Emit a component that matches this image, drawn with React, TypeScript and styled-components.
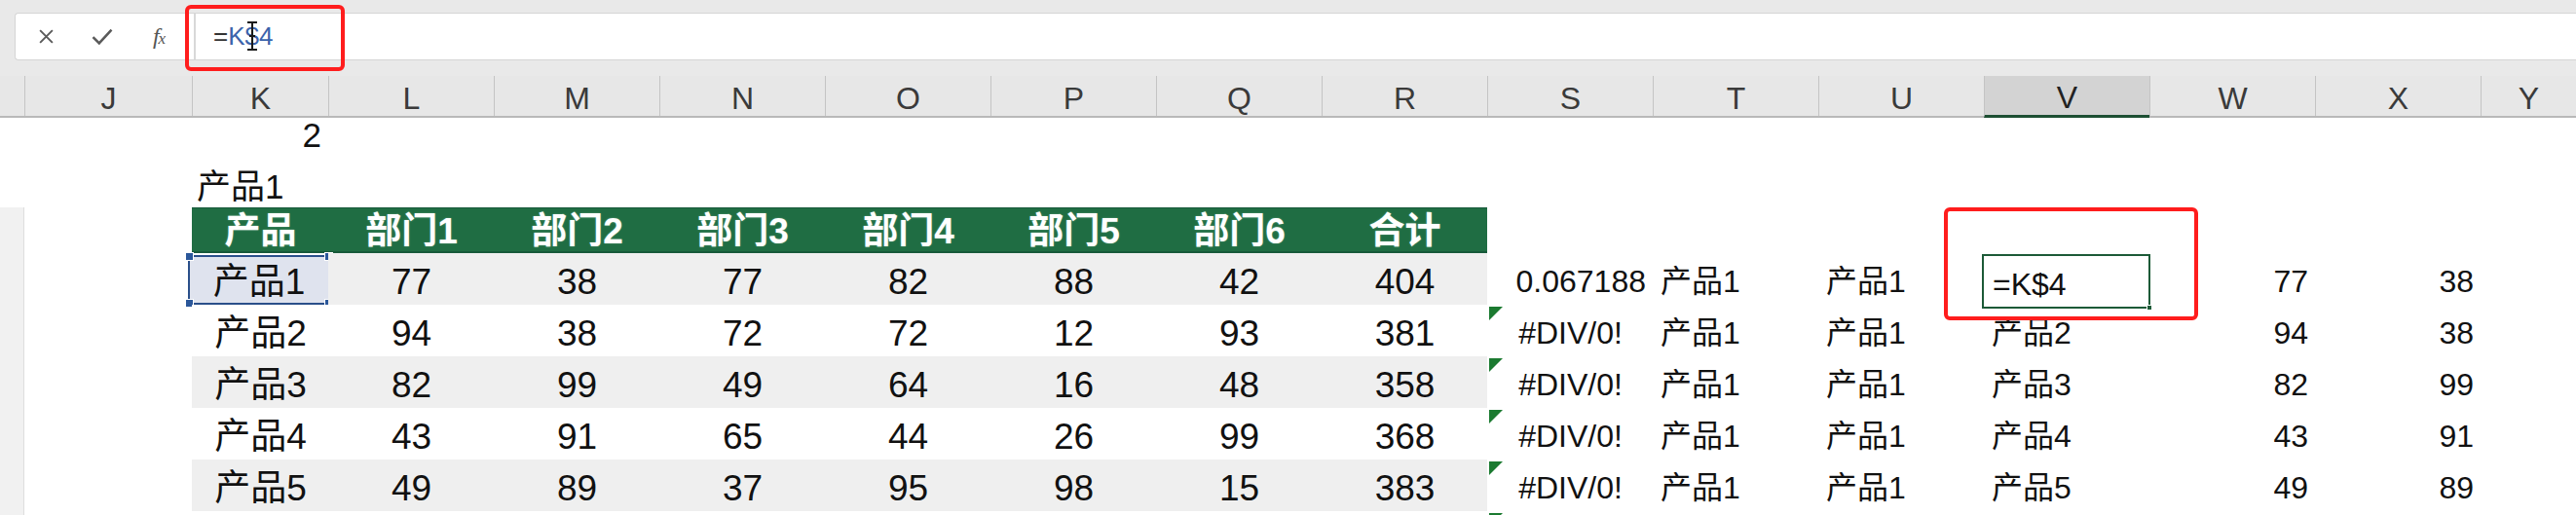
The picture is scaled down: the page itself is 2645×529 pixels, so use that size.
import React from 'react';
import styled, { createGlobalStyle, css } from 'styled-components';

const COLS = '25px 172px 140px repeat(13, 170px) 98px';
const TABLE_FONT = '"Liberation Sans", "Noto Sans CJK SC", sans-serif';
const PLAIN_FONT = '"Liberation Sans", "Noto Sans CJK SC", Arial, sans-serif';

const GlobalStyle = createGlobalStyle`
  html, body {
    margin: 0;
    padding: 0;
    background: #ffffff;
    font-family: ${PLAIN_FONT};
  }
  * {
    box-sizing: border-box;
  }
`;

const Page = styled.div`
  position: relative;
  width: 2645px;
  height: 529px;
  overflow: hidden;
  background: #ffffff;
`;

/* ---------- formula bar ---------- */

const TopBar = styled.div`
  height: 78px;
  padding: 13px 0 0 15px;
  background: #e9e9e9;
`;

const FormulaBar = styled.div`
  display: flex;
  height: 49px;
  background: #ffffff;
  border: 1px solid #d5d5d5;
  border-right: none;
  border-radius: 4px 0 0 4px;
`;

const IconGroup = styled.div`
  display: flex;
  align-items: center;
  width: 183px;
  padding-left: 2px;
`;

const IconSlot = styled.div`
  display: flex;
  align-items: center;
  justify-content: center;
  width: 58px;
  height: 100%;
  color: #5a5a5a;
`;

const FxGlyph = styled.span`
  font-family: "Liberation Serif", "DejaVu Serif", serif;
  font-style: italic;
  font-size: 24px;
  color: #555555;
  letter-spacing: -1px;

  small {
    font-size: 17px;
  }
`;

const Divider = styled.div`
  width: 2px;
  background: #d8d8d8;
`;

const FormulaInput = styled.div`
  position: relative;
  display: flex;
  align-items: center;
  flex: 1;
  padding-left: 18px;
  font-family: ${PLAIN_FONT};
  font-size: 26px;
  color: #333333;
`;

const RefText = styled.span`
  color: #3b63ab;
`;

const IBeam = styled.svg`
  position: absolute;
  left: 52px;
  top: 8px;
`;

/* ---------- column headers ---------- */

const ColumnHeaders = styled.div`
  display: grid;
  grid-template-columns: ${COLS};
  height: 43px;
  background: #e7e7e7;
  border-bottom: 2px solid #b9b9b9;
`;

const ColHead = styled.div<{ $active?: boolean }>`
  display: flex;
  align-items: center;
  justify-content: center;
  padding-top: 4px;
  border-left: 1px solid #c4c4c4;
  font-family: ${PLAIN_FONT};
  font-size: 32px;
  line-height: 1;
  color: #3a3a3a;

  ${({ $active }) =>
    $active &&
    css`
      background: #d3d3d3;
      color: #222222;
      border-bottom: 3px solid #1d4f33;
      margin-bottom: -2px;
    `}
`;

const Corner = styled.div``;

/* ---------- sheet rows ---------- */

const SheetRow = styled.div<{ $h: number }>`
  display: grid;
  grid-template-columns: ${COLS};
  height: ${({ $h }) => $h}px;
`;

const RowHead = styled.div<{ $shaded?: boolean }>`
  background: ${({ $shaded }) => ($shaded ? '#f1f1f1' : '#ffffff')};
  border-right: ${({ $shaded }) => ($shaded ? '1px solid #dedede' : 'none')};
`;

type Band = 'green' | 'grey' | 'white' | 'none';
type Align = 'left' | 'center' | 'right';

const bandColor: Record<Band, string> = {
  green: '#1f6d43',
  grey: '#efefef',
  white: '#ffffff',
  none: 'transparent',
};

const justify: Record<Align, string> = {
  left: 'flex-start',
  center: 'center',
  right: 'flex-end',
};

const Cell = styled.div<{
  $band?: Band;
  $align?: Align;
  $plain?: boolean;
  $bold?: boolean;
  $valign?: 'center' | 'bottom';
}>`
  position: relative;
  display: flex;
  align-items: ${({ $valign }) => ($valign === 'bottom' ? 'flex-end' : 'center')};
  justify-content: ${({ $align = 'center' }) => justify[$align]};
  padding: ${({ $valign }) => ($valign === 'bottom' ? '0 7px 4px 5px' : '5px 7px 0 8px')};
  background: ${({ $band = 'none' }) => bandColor[$band]};
  font-family: ${({ $plain }) => ($plain ? PLAIN_FONT : TABLE_FONT)};
  font-size: ${({ $plain, $valign }) => ($plain ? 32 : $valign === 'bottom' ? 35 : 37)}px;
  line-height: 1;
  font-weight: ${({ $bold }) => ($bold ? 700 : 400)};
  color: ${({ $band }) => ($band === 'green' ? '#ffffff' : '#111111')};
  white-space: nowrap;

  ${({ $band }) =>
    $band === 'green' &&
    css`
      padding-top: 3px;
      border-top: 1px solid #17593a;
      border-bottom: 2px solid #17593a;
      text-shadow: 0 0 2px rgba(230, 255, 240, 0.35);
    `}
`;

const SelectedCell = styled(Cell)`
  background: #dfe3ee;
  border: 2px solid #2a4f8a;
  margin: 2px -2px 0 -4px;
  padding: 3px 0 0 0;
`;

const Handle = styled.span<{ $x: 'l' | 'r'; $y: 't' | 'b' }>`
  position: absolute;
  width: 9px;
  height: 9px;
  background: #2b579a;
  border: 1px solid #ffffff;
  ${({ $x }) => ($x === 'l' ? 'left: -5px;' : 'right: -5px;')}
  ${({ $y }) => ($y === 't' ? 'top: -5px;' : 'bottom: -5px;')}
`;

const EditCell = styled(Cell)`
  background: #ffffff;
  border: 2px solid #1c5a37;
  margin: 1px -1px -4px -2px;
  padding-left: 9px;
`;

const FillHandle = styled.span`
  position: absolute;
  right: -4px;
  bottom: -4px;
  width: 6px;
  height: 6px;
  background: #1c5a37;
  border: 1px solid #ffffff;
`;

const ErrorFlag = styled.span`
  position: absolute;
  left: 2px;
  top: 2px;
  width: 0;
  height: 0;
  border-top: 14px solid #1b7a30;
  border-right: 14px solid transparent;
`;

const Callout = styled.div<{ $x: number; $y: number; $w: number; $h: number }>`
  position: absolute;
  left: ${({ $x }) => $x}px;
  top: ${({ $y }) => $y}px;
  width: ${({ $w }) => $w}px;
  height: ${({ $h }) => $h}px;
  border: 4px solid #ff1d1d;
  border-radius: 6px;
  pointer-events: none;
`;

/* ---------- data ---------- */

const letters = ['J', 'K', 'L', 'M', 'N', 'O', 'P', 'Q', 'R', 'S', 'T', 'U', 'V', 'W', 'X', 'Y'];
const headers = ['产品', '部门1', '部门2', '部门3', '部门4', '部门5', '部门6', '合计'];
const rows: [string, ...number[]][] = [
  ['产品1', 77, 38, 77, 82, 88, 42, 404],
  ['产品2', 94, 38, 72, 72, 12, 93, 381],
  ['产品3', 82, 99, 49, 64, 16, 48, 358],
  ['产品4', 43, 91, 65, 44, 26, 99, 368],
  ['产品5', 49, 89, 37, 95, 98, 15, 383],
];

const CloseIcon = () => (
  <svg width="17" height="17" viewBox="0 0 16 16">
    <path d="M2 2 L14 14 M14 2 L2 14" stroke="#5a5a5a" strokeWidth="1.8" fill="none" />
  </svg>
);

const CheckIcon = () => (
  <svg width="24" height="19" viewBox="0 0 22 18">
    <path d="M2 9.5 L8 15.5 L20 2.5" stroke="#5a5a5a" strokeWidth="2.4" fill="none" />
  </svg>
);

export default function App() {
  return (
    <Page>
      <GlobalStyle />
      <TopBar>
        <FormulaBar>
          <IconGroup>
            <IconSlot>
              <CloseIcon />
            </IconSlot>
            <IconSlot>
              <CheckIcon />
            </IconSlot>
            <IconSlot>
              <FxGlyph>
                f<small>x</small>
              </FxGlyph>
            </IconSlot>
          </IconGroup>
          <Divider />
          <FormulaInput>
            =<RefText>K$4</RefText>
            <IBeam width="12" height="30" viewBox="0 0 12 30">
              <path d="M1 1 H11 M6 1 V29 M1 29 H11 M3 15 H9" stroke="#1a1a1a" strokeWidth="2" fill="none" />
            </IBeam>
          </FormulaInput>
        </FormulaBar>
      </TopBar>

      <ColumnHeaders>
        <Corner />
        {letters.map((l) => (
          <ColHead key={l} $active={l === 'V'}>
            {l}
          </ColHead>
        ))}
      </ColumnHeaders>

      <SheetRow $h={39}>
        <RowHead />
        <Cell />
        <Cell $align="right" $valign="bottom">
          2
        </Cell>
        {Array.from({ length: 14 }).map((_, i) => (
          <Cell key={i} />
        ))}
      </SheetRow>

      <SheetRow $h={53}>
        <RowHead />
        <Cell />
        <Cell $align="left" $valign="bottom">
          产品1
        </Cell>
        {Array.from({ length: 14 }).map((_, i) => (
          <Cell key={i} />
        ))}
      </SheetRow>

      <SheetRow $h={47}>
        <RowHead $shaded />
        <Cell />
        {headers.map((h) => (
          <Cell key={h} $band="green" $bold>
            {h}
          </Cell>
        ))}
        {Array.from({ length: 7 }).map((_, i) => (
          <Cell key={i} />
        ))}
      </SheetRow>

      {rows.map((r, i) => {
        const band: Band = i % 2 === 0 ? 'grey' : 'white';
        const [name, ...nums] = r;
        return (
          <SheetRow key={name} $h={53}>
            <RowHead $shaded />
            <Cell />
            {i === 0 ? (
              <SelectedCell>
                {name}
                <Handle $x="l" $y="t" />
                <Handle $x="r" $y="t" />
                <Handle $x="l" $y="b" />
                <Handle $x="r" $y="b" />
              </SelectedCell>
            ) : (
              <Cell $band={band}>{name}</Cell>
            )}
            {nums.map((n, j) => (
              <Cell key={j} $band={band}>
                {n}
              </Cell>
            ))}
            {i === 0 ? (
              <Cell $plain $align="right">
                0.067188
              </Cell>
            ) : (
              <Cell $plain>
                <ErrorFlag />
                #DIV/0!
              </Cell>
            )}
            <Cell $plain $align="left">
              产品1
            </Cell>
            <Cell $plain $align="left">
              产品1
            </Cell>
            {i === 0 ? (
              <EditCell $plain $align="left">
                =K$4
                <FillHandle />
              </EditCell>
            ) : (
              <Cell $plain $align="left">
                {name}
              </Cell>
            )}
            <Cell $plain $align="right">
              {nums[0]}
            </Cell>
            <Cell $plain $align="right">
              {nums[1]}
            </Cell>
            <Cell />
          </SheetRow>
        );
      })}

      <SheetRow $h={4}>
        <RowHead $shaded />
        <Cell />
        {Array.from({ length: 8 }).map((_, i) => (
          <Cell key={i} $band="white" />
        ))}
        <Cell>
          <ErrorFlag />
        </Cell>
        {Array.from({ length: 6 }).map((_, i) => (
          <Cell key={i} />
        ))}
      </SheetRow>

      <Callout $x={190} $y={5} $w={164} $h={68} />
      <Callout $x={1996} $y={213} $w={261} $h={116} />
    </Page>
  );
}
